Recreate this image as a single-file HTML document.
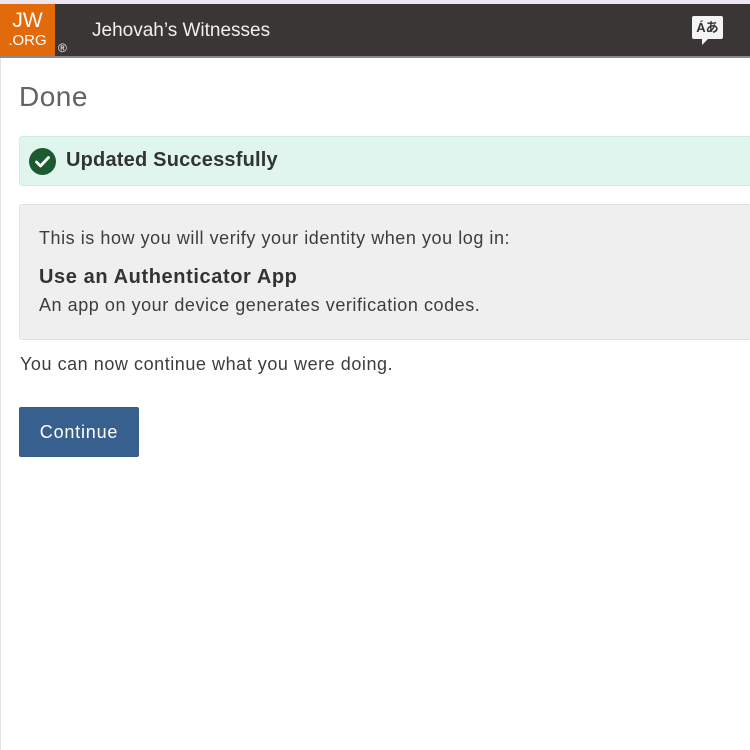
<!DOCTYPE html>
<html><head><meta charset="utf-8"><style>
body{margin:0;width:750px;height:750px;overflow:hidden;background:#fff;font-family:"Liberation Sans","Noto Sans CJK JP",sans-serif;color:#3d3d3d;position:relative}
.lb{position:absolute;left:0;top:57px;width:1px;height:693px;background:#e4e4e4}
.top{position:absolute;left:0;top:0;width:750px;height:4px;background:#ede6f0}
.hdr{position:absolute;left:0;top:4px;width:750px;height:52px;background:#393635;border-bottom:2px solid #8a8a8a}
.logo{position:absolute;left:0;top:0;width:55px;height:52px;background:#e36a0b;color:#fff;text-align:center;line-height:1}
.t{position:absolute;left:92px;top:16px;color:#f0f0f0;font-size:19px;letter-spacing:0}
.reg{position:absolute;left:58px;top:37px;color:#fff;font-size:12px}
.lang{position:absolute;left:692px;top:12px;width:31px;height:23px;background:#f4f4f4;border-radius:2px;font-size:13px;font-weight:bold;color:#333;text-align:center;line-height:24px}
.lang:after{content:"";position:absolute;left:10px;bottom:-6px;border-left:6px solid #f4f4f4;border-bottom:6px solid transparent}
h1{position:absolute;left:19px;top:81px;margin:0;font-weight:normal;font-size:28px;color:#626262;letter-spacing:0.5px}
.ok{position:absolute;left:19px;top:136px;width:740px;height:50px;background:#dff5ee;border:1px solid #d0ece2;border-radius:3px;box-sizing:border-box}
.ok svg{position:absolute;left:9px;top:11px}
.ok span{position:absolute;left:46px;top:12px;font-size:20px;font-weight:bold;color:#333;letter-spacing:0.2px}
.box{position:absolute;left:19px;top:204px;width:740px;height:136px;background:#efefef;border:1px solid #e2e2e2;border-radius:3px;box-sizing:border-box}
.p{position:absolute;font-size:18px;letter-spacing:0.55px}
.btn{position:absolute;left:19px;top:407px;width:120px;height:50px;background:#37608f;border-radius:2px;color:#fff;font-size:18px;text-align:center;line-height:50px;letter-spacing:0.8px}
</style></head><body>
<div class="top"></div>
<div class="lb"></div>
<div class="hdr">
 <div class="logo"><div style="font-size:21px;padding-top:6px">JW</div><div style="font-size:15px;margin-top:2px">.ORG</div></div>
 <div class="reg">®</div>
 <div class="t">Jehovah’s Witnesses</div>
 <div class="lang">Áあ</div>
</div>
<h1>Done</h1>
<div class="ok"><svg width="27" height="27" viewBox="0 0 27 27"><circle cx="13.5" cy="13.5" r="13.5" fill="#1e5a2f"/><path d="M7.5 14l4 4 8-8.5" stroke="#fff" stroke-width="2.8" fill="none" stroke-linecap="round" stroke-linejoin="round"/></svg><span>Updated Successfully</span></div>
<div class="box">
 <div class="p" style="left:19px;top:23px">This is how you will verify your identity when you log in:</div>
 <div class="p" style="left:19px;top:61px;font-size:20px;font-weight:bold;color:#333;letter-spacing:0.6px">Use an Authenticator App</div>
 <div class="p" style="left:19px;top:90px">An app on your device generates verification codes.</div>
</div>
<div class="p" style="left:20px;top:354px">You can now continue what you were doing.</div>
<div class="btn">Continue</div>
</body></html>
